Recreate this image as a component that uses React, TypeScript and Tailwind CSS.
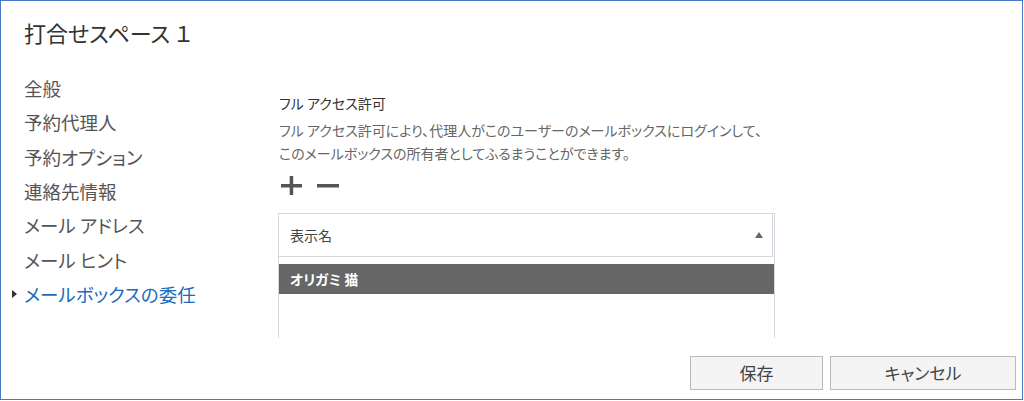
import type { FC } from 'react';

const navItems = [
  '全般',
  '予約代理人',
  '予約オプション',
  '連絡先情報',
  'メール アドレス',
  'メール ヒント',
  'メールボックスの委任',
];

const ACTIVE = 'メールボックスの委任';

const PlusIcon: FC = () => (
  <svg width="21" height="19" viewBox="0 0 21 19" className="block">
    <rect x="0" y="8" width="21" height="3.5" fill="#555" />
    <rect x="8.7" y="0" width="3.5" height="19" fill="#555" />
  </svg>
);

const MinusIcon: FC = () => (
  <svg width="22" height="19" viewBox="0 0 22 19" className="block">
    <rect x="0" y="8" width="22" height="3.5" fill="#555" />
  </svg>
);

const App: FC = () => {
  return (
    <div className="w-[1023px] h-[400px] border border-[#4a78c8] bg-white flex flex-col font-['Noto_Sans_CJK_JP','Noto_Sans',sans-serif] [font-feature-settings:'palt']">
      {/* タイトル */}
      <div className="pt-[15px] pl-[23px] text-[22px] leading-[32px] text-[#333]">打合せスペース １</div>

      <div className="flex mt-[23px]">
        {/* 左ナビ */}
        <div className="w-[278px] pl-[10px]">
          {navItems.map((item) => {
            const active = item === ACTIVE;
            return (
              <div key={item} className="flex items-center h-[34.33px]">
                <div className="w-[13px] flex items-center">
                  {active && (
                    <span className="block w-0 h-0 border-y-[4px] border-l-[5px] border-y-transparent border-l-[#333] ml-[1px]" />
                  )}
                </div>
                <span className={`text-[18.5px] leading-[34px] ${active ? 'text-[#1e6bb8]' : 'text-[#555]'}`}>{item}</span>
              </div>
            );
          })}
        </div>

        {/* 本文 */}
        <div className="pt-[21px]">
          <div className="text-[14px] leading-[22px] text-[#333]">フル アクセス許可</div>
          <div className="mt-[5px] text-[14px] leading-[23px] text-[#666]">
            <div>フル アクセス許可により、代理人がこのユーザーのメールボックスにログインして、</div>
            <div>このメールボックスの所有者としてふるまうことができます。</div>
          </div>

          <div className="flex items-center gap-[15px] mt-[11px] ml-[2px]">
            <PlusIcon />
            <MinusIcon />
          </div>

          <div className="mt-[18px] ml-[-1px] w-[497px] h-[125px] border-t border-x border-[#d3d9df]">
            <div className="mr-[1px] h-[43px] border-r border-b border-[#d3d9df] flex items-center justify-between pl-[11px] pr-[9px]">
              <span className="text-[14px] text-[#444]">表示名</span>
              <span className="block w-0 h-0 border-x-[4px] border-b-[6px] border-x-transparent border-b-[#666]" />
            </div>
            <div className="mt-[7px] h-[30px] bg-[#666] flex items-center pl-[11px]">
              <span className="text-[14px] font-bold text-white">オリガミ 猫</span>
            </div>
          </div>
        </div>
      </div>

      {/* ボタン */}
      <div className="mt-auto flex justify-end gap-[7px] pr-[6px] pb-[9px]">
        <button className="w-[133px] h-[34px] bg-[#f4f4f4] border border-[#b9b9b9] text-[17px] text-[#444]">保存</button>
        <button className="w-[186px] h-[34px] bg-[#f4f4f4] border border-[#b9b9b9] text-[17px] text-[#444]">キャンセル</button>
      </div>
    </div>
  );
};

export default App;
